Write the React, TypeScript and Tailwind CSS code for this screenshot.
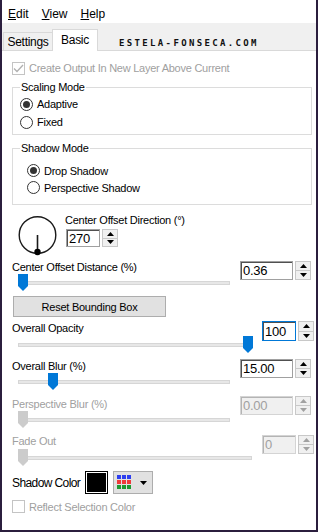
import React from "react";

const UI = { fontFamily: '"Liberation Sans", Arial, sans-serif' };

const Thumb = ({ disabled }: { disabled?: boolean }) => (
  <svg width="10" height="17" viewBox="0 0 10 17">
    <polygon points="0,0 10,0 10,12 5,17 0,12" fill={disabled ? "#cccccc" : "#0078d7"} />
  </svg>
);

const Slider = ({ width, pos, disabled }: { width: number; pos: number; disabled?: boolean }) => (
  <div className="relative h-[17px] ml-[6px] flex items-center" style={{ width }}>
    <div className="w-full h-[4px] bg-[#e7e7e7] border border-[#d6d6d6]" />
    <div className="absolute top-0" style={{ left: pos }}>
      <Thumb disabled={disabled} />
    </div>
  </div>
);

const SpinButtons = ({ disabled, h }: { disabled?: boolean; h: number }) => {
  const c = disabled ? "#a0a0a0" : "#000";
  return (
    <div className="flex flex-col w-[16px] border border-[#c8c8c8] bg-[#f0f0f0]" style={{ height: h }}>
      <div className="flex-1 flex items-center justify-center border-b border-[#c8c8c8]">
        <svg width="7" height="4" viewBox="0 0 7 4"><polygon points="0,4 7,4 3.5,0" fill={c} /></svg>
      </div>
      <div className="flex-1 flex items-center justify-center">
        <svg width="7" height="4" viewBox="0 0 7 4"><polygon points="0,0 7,0 3.5,4" fill={c} /></svg>
      </div>
    </div>
  );
};

const SpinBox = ({
  value,
  width,
  height = 19,
  disabled,
  focused,
}: {
  value: string;
  width: number;
  height?: number;
  disabled?: boolean;
  focused?: boolean;
}) => (
  <div className="flex items-start gap-[2px]">
    <div
      className={
        "flex border " +
        (focused ? "border-[#0078d7]" : disabled ? "border-[#d4d4d4]" : "border-[#a0a0a0]")
      }
      style={{ width, height }}
    >
      <div
        className={
          "flex-1 flex items-center pl-[1px] text-[13px] border-t border-l " +
          (disabled
            ? "border-[#b4b4b4] bg-[#f0f0f0] text-[#a0a0a0]"
            : "border-[#505050] bg-white text-black")
        }
      >
        {value}
      </div>
    </div>
    <SpinButtons disabled={disabled} h={height} />
  </div>
);

const Radio = ({ checked, label }: { checked?: boolean; label: string }) => (
  <div className="flex items-center gap-[4px] h-full">
    <div className="w-[13px] h-[13px] rounded-full border border-[#333] bg-white flex items-center justify-center">
      {checked && <div className="w-[7px] h-[7px] rounded-full bg-[#333]" />}
    </div>
    <span>{label}</span>
  </div>
);

const Check = ({ checked, label }: { checked?: boolean; label: string }) => (
  <div className="flex items-center gap-[4px] text-[#a0a0a0]">
    <div className="w-[13px] h-[13px] border border-[#c4c4c4] bg-white flex items-center justify-center">
      {checked && (
        <svg width="11" height="9" viewBox="0 0 11 9">
          <polyline points="1,4.5 4,7.5 10,1" fill="none" stroke="#b0b0b0" strokeWidth="1.3" />
        </svg>
      )}
    </div>
    <span>{label}</span>
  </div>
);

export default function App() {
  return (
    <div
      className="w-[318px] h-[532px] flex flex-col bg-white border-x-2 border-b-2 border-[#2b1e3e] overflow-hidden text-[11px] leading-[14px] tracking-[-0.25px] text-black"
      style={UI}
    >
      {/* menu */}
      <div className="h-[23px] flex items-center pt-[4px] pl-[6px] gap-[13px] text-[12px] tracking-normal">
        <span><span className="underline">E</span>dit</span>
        <span><span className="underline">V</span>iew</span>
        <span><span className="underline">H</span>elp</span>
      </div>

      {/* tabs */}
      <div className="h-[28px] flex items-end pl-[1px] bg-[#f0f0f0] border-b border-[#d9d9d9] text-[12px] tracking-[-0.3px]">
        <div className="h-[18px] w-[49px] flex items-center justify-center border-t border-l border-[#d9d9d9] bg-[#f0f0f0]">
          Settings
        </div>
        <div className="h-[22px] w-[46px] -mb-px flex items-start pt-[3px] justify-center border-t border-x border-[#d9d9d9] bg-white">
          Basic
        </div>
        <div
          className="ml-[21px] mb-[2px] text-[9px] leading-[9px] font-bold tracking-[2.35px] text-[#111]"
          style={{ fontFamily: '"DejaVu Sans Mono", monospace' }}
        >
          ESTELA-FONSECA.COM
        </div>
      </div>

      {/* content */}
      <div className="flex flex-col pl-[10px]">
        <div className="mt-[10px] h-[14px] flex items-center">
          <Check checked label="Create Output In New Layer Above Current" />
        </div>

        <fieldset className="mt-[5px] w-[300px] border border-[#dcdcdc] pb-[3px]">
          <legend className="ml-[7px] px-[1px]">Scaling Mode</legend>
          <div className="pl-[7px] mt-[1px]">
            <div className="h-[18px]"><Radio checked label="Adaptive" /></div>
            <div className="h-[18px]"><Radio label="Fixed" /></div>
          </div>
        </fieldset>

        <fieldset className="mt-[6px] w-[300px] border border-[#dcdcdc] pt-[7px] pb-[8px]">
          <legend className="ml-[7px] px-[1px]">Shadow Mode</legend>
          <div className="pl-[14px]">
            <div className="h-[17px]"><Radio checked label="Drop Shadow" /></div>
            <div className="h-[17px]"><Radio label="Perspective Shadow" /></div>
          </div>
        </fieldset>

        {/* direction */}
        <div className="mt-[8px] flex items-start">
          <svg className="ml-[5px] mt-[2px]" width="40" height="44" viewBox="0 0 40 44">
            <circle cx="20.5" cy="20" r="18.3" fill="none" stroke="#1a1a1a" strokeWidth="1.4" />
            <line x1="20.5" y1="20" x2="20.5" y2="37" stroke="#1a1a1a" strokeWidth="1.6" />
            <circle cx="20.5" cy="37" r="3.2" fill="#000" />
          </svg>
          <div className="ml-[8px] flex flex-col">
            <span className="h-[14px]">Center Offset Direction (°)</span>
            <div className="mt-[2px] ml-[1px]">
              <SpinBox value="270" width={34} height={18} />
            </div>
          </div>
        </div>

        {/* distance */}
        <div className="mt-[1px] flex items-start">
          <div className="w-[228px] flex flex-col">
            <span className="h-[14px]">Center Offset Distance (%)</span>
            <Slider width={212} pos={0} />
          </div>
          <div className="mt-[1px]">
            <SpinBox value="0.36" width={53} />
          </div>
        </div>

        <button className="mt-[5px] ml-[1px] w-[153px] h-[21px] bg-[#e1e1e1] border border-[#adadad] text-[11px]">
          Reset Bounding Box
        </button>

        {/* opacity */}
        <div className="mt-[4px] flex items-start">
          <div className="w-[250px] flex flex-col">
            <span className="h-[14px]">Overall Opacity</span>
            <div className="mt-[1px]"><Slider width={234} pos={225} /></div>
          </div>
          <SpinBox value="100" width={34} height={20} focused />
        </div>

        {/* blur */}
        <div className="mt-[6px] flex items-start">
          <div className="w-[228px] flex flex-col">
            <span className="h-[14px]">Overall Blur (%)</span>
            <Slider width={212} pos={30} />
          </div>
          <SpinBox value="15.00" width={53} />
        </div>

        {/* perspective blur */}
        <div className="mt-[6px] flex items-start text-[#a0a0a0]">
          <div className="w-[228px] flex flex-col pt-[1px]">
            <span className="h-[14px]">Perspective Blur (%)</span>
            <Slider width={212} pos={0} disabled />
          </div>
          <SpinBox value="0.00" width={53} disabled />
        </div>

        {/* fade out */}
        <div className="mt-[6px] flex items-start text-[#a0a0a0]">
          <div className="w-[250px] flex flex-col">
            <span className="h-[14px]">Fade Out</span>
            <div className="mt-[1px]"><Slider width={234} pos={0} disabled /></div>
          </div>
          <div className="mt-[1px]">
            <SpinBox value="0" width={34} disabled />
          </div>
        </div>

        {/* shadow color */}
        <div className="mt-[5px] h-[23px] flex items-center">
          <span className="w-[73px] text-[12px] tracking-[-0.6px]">Shadow Color</span>
          <div className="w-[23px] h-[23px] border border-black p-[1px] bg-white">
            <div className="w-full h-full bg-black" />
          </div>
          <div className="ml-[5px] w-[40px] h-[23px] bg-[#e1e1e1] border border-[#adadad] flex items-center pl-[3px] gap-[8px]">
            <svg width="15" height="15" viewBox="0 0 15 15">
              <rect x="0" y="0" width="4" height="4" fill="#2d3ef0" />
              <rect x="5" y="0" width="4" height="4" fill="#2d3ef0" />
              <rect x="10" y="0" width="4" height="4" fill="#2d3ef0" />
              <rect x="0" y="5" width="4" height="4" fill="#ef3b3b" />
              <rect x="5" y="5" width="4" height="4" fill="#ef3b3b" />
              <rect x="10" y="5" width="4" height="4" fill="#ef3b3b" />
              <rect x="0" y="10" width="4" height="4" fill="#1e9a32" />
              <rect x="5" y="10" width="4" height="4" fill="#1e9a32" />
              <rect x="10" y="10" width="4" height="4" fill="#1e9a32" />
            </svg>
            <svg width="7" height="4" viewBox="0 0 7 4"><polygon points="0,0 7,0 3.5,4" fill="#000" /></svg>
          </div>
        </div>

        <div className="mt-[6px] h-[13px] flex items-center">
          <Check label="Reflect Selection Color" />
        </div>
      </div>
    </div>
  );
}
